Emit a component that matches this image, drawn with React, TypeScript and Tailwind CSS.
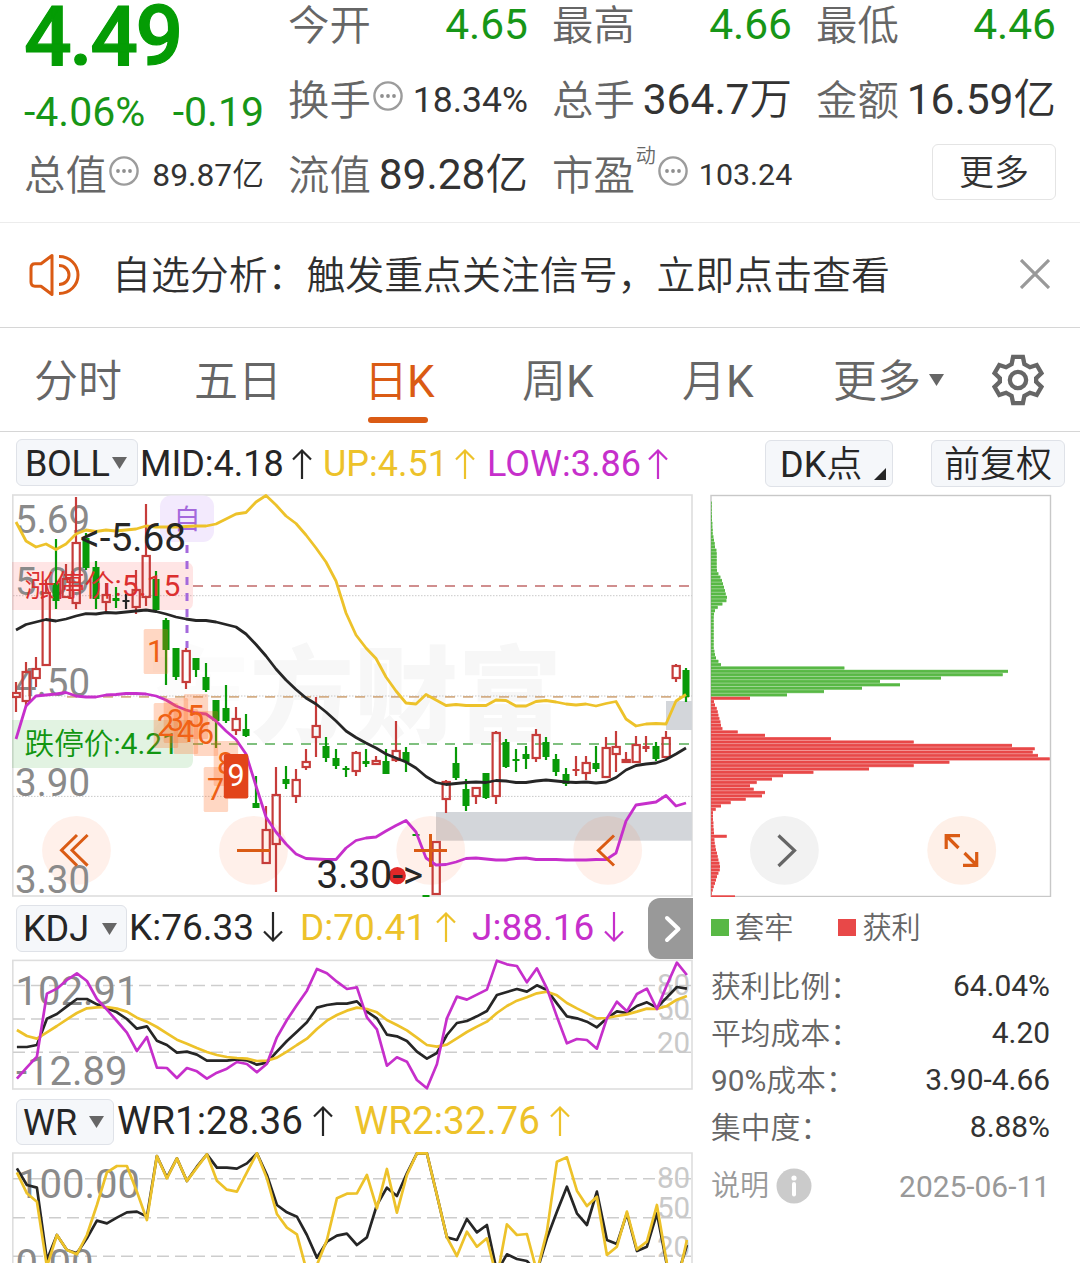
import React from "react";

const INK = "#262626";
const YELLOW = "#edc22a";
const MAGENTA = "#c62fcb";
const RED = "#c63c3a";
const GREEN = "#089a08";
const ORANGE = "#da5b14";

type Candle = [kind: "r" | "g" | "k", high: number, top: number, bottom: number, low: number];

const candles: Candle[] = [
  ["r", 682, 692, 698, 712], ["r", 662, 671, 702, 707], ["r", 657, 668, 679, 687], ["r", 580, 592, 666, 666],
  ["g", 539, 583, 601, 609], ["r", 564, 578, 598, 598], ["r", 497, 542, 604, 609], ["g", 533, 538, 568, 570],
  ["g", 561, 567, 599, 609], ["r", 583, 594, 603, 612], ["g", 587, 598, 601, 608], ["k", 594, 600, 602, 609],
  ["r", 570, 589, 608, 614], ["r", 504, 555, 598, 606], ["g", 571, 579, 610, 612], ["g", 618, 620, 650, 685],
  ["g", 648, 648, 677, 680], ["r", 648, 650, 683, 689], ["g", 658, 658, 670, 677], ["g", 663, 677, 690, 692],
  ["g", 700, 700, 721, 748], ["g", 685, 708, 721, 723], ["r", 707, 718, 731, 735], ["g", 714, 729, 736, 737],
  ["g", 776, 803, 808, 808], ["r", 806, 829, 864, 864], ["r", 767, 794, 845, 892], ["g", 766, 779, 784, 789],
  ["r", 769, 779, 797, 803], ["r", 749, 761, 768, 770], ["r", 697, 725, 738, 757], ["g", 737, 746, 758, 762],
  ["g", 749, 758, 766, 769], ["g", 766, 768, 770, 777], ["r", 751, 752, 772, 776], ["g", 749, 761, 764, 767],
  ["r", 756, 760, 765, 765], ["g", 749, 761, 774, 774], ["r", 721, 750, 761, 762], ["g", 747, 752, 762, 772],
  ["g", 834, 834, 836, 836], ["g", 895, 895, 897, 897], ["r", 841, 841, 895, 895], ["r", 780, 781, 800, 813],
  ["g", 747, 763, 778, 780], ["g", 779, 789, 806, 811], ["r", 787, 787, 797, 804], ["g", 773, 773, 798, 799],
  ["r", 731, 732, 797, 804], ["g", 739, 742, 767, 768], ["g", 749, 759, 761, 772], ["g", 746, 754, 759, 769],
  ["r", 729, 734, 759, 762], ["g", 737, 742, 757, 760], ["g", 754, 759, 772, 776], ["g", 768, 774, 784, 786],
  ["r", 756, 769, 771, 776], ["r", 756, 762, 774, 780], ["g", 746, 763, 769, 772], ["r", 737, 747, 778, 778],
  ["r", 731, 746, 755, 772], ["r", 752, 759, 763, 763], ["r", 736, 744, 763, 763], ["r", 736, 746, 749, 752],
  ["g", 742, 746, 759, 761], ["r", 731, 737, 758, 758], ["r", 664, 665, 679, 682], ["g", 668, 670, 697, 702],
];

const upper = [
  522, 541, 547, 544, 549.5, 544, 534, 530, 531.5, 530, 531, 530, 529, 526, 527, 527, 527, 526.5, 526, 526, 524, 519, 514,
  512.5, 502, 495.5, 505, 516, 523.5, 535, 548, 562, 581, 613, 635, 648, 658.5, 677, 691, 703, 704, 694.5, 700, 705.5, 704.5,
  705.5, 705.5, 705.5, 700, 700.5, 706, 706, 701.5, 700.5, 702, 704, 705, 704, 706, 703.5, 701.5, 719, 726, 724, 723.5, 724,
  701, 694.5,
];
const middle = [
  630, 624.5, 622, 619.5, 621, 619, 616, 613.7, 614, 612.5, 613, 612, 611, 610, 611.5, 614, 617, 619, 620.5, 620.5, 622,
  624.5, 627, 634, 644.5, 656, 669, 680, 689.5, 698, 704, 712, 721, 731, 737.5, 743, 748, 754, 758, 762, 768, 776.5, 782.5,
  784.5, 783.5, 782.5, 782, 782.5, 780.5, 781, 782.5, 782.5, 781, 780, 781, 782, 782.5, 782, 783, 782, 777.5, 770, 765.5,
  764, 763, 759.5, 754, 748,
];
const lower = [
  739, 706, 696, 695, 694, 692.5, 696, 697, 697, 695, 694.5, 693.5, 693.5, 694, 696, 700, 706, 710, 713, 714, 721, 731, 739.5,
  754, 786, 817, 832, 844, 854, 858.5, 859, 859.5, 859.5, 848, 840.5, 838, 837, 831, 825.5, 820.5, 832, 858, 865, 864.5, 862,
  858.5, 858, 859, 860, 860, 858.5, 858, 859.5, 859.5, 859.5, 860, 860, 860, 859.5, 859.7, 853, 821, 805, 803.5, 802, 795.5,
  806, 803,
];

const kdjK = [
  456, 456, 450, 371, 357, 334, 312, 312, 328, 340, 352, 372, 401, 394, 437, 450, 473, 470, 479, 497, 497, 497, 493, 496, 509,
  503, 470, 438, 410, 382, 338, 330, 326, 326, 319, 350, 370, 419, 424, 438, 470, 491, 474, 420, 384, 378, 364, 348, 300, 291,
  282, 290, 271, 285, 325, 364, 370, 380, 397, 370, 349, 354, 333, 322, 338, 307, 276, 281,
];
const kdjD = [
  405, 423, 431, 412, 393, 373, 354, 340, 337, 336, 341, 350, 368, 380, 396, 415, 434, 446, 459, 471, 480, 486, 489, 491, 498,
  497, 488, 470, 450, 431, 402, 377, 360, 347, 338, 342, 352, 375, 390, 406, 428, 450, 455, 449, 430, 411, 395, 380, 354, 333,
  317, 307, 295, 290, 301, 324, 340, 355, 370, 369, 363, 358, 350, 341, 342, 333, 314, 303,
];
const kdjJ = [
  551, 517, 485, 296, 281, 255, 235, 258, 312, 344, 378, 413, 468, 426, 518, 519, 549, 519, 529, 551, 533, 521, 501, 507, 532,
  506, 427, 375, 330, 287, 222, 235, 260, 282, 277, 367, 403, 512, 487, 500, 555, 580, 508, 370, 305, 314, 299, 284, 197, 208,
  213, 262, 220, 280, 365, 445, 432, 435, 461, 370, 320, 349, 297, 281, 342, 270, 203, 240,
];
const wr1 = [
  820, 870, 878, 1095, 1020, 1065, 1075, 1030, 977, 985, 968, 952, 950, 965, 783, 848, 790, 858, 815, 778, 818, 818, 821, 805,
  775, 840, 930, 952, 965, 1020, 1088, 1040, 1022, 1016, 1050, 1027, 930, 878, 903, 835, 775, 775, 900, 1027, 1035, 972, 1012,
  990, 1130, 1078, 1092, 1098, 1130, 1030, 950, 875, 955, 990, 890, 1035, 1047, 955, 1068, 1055, 955, 1110, 1150, 1050,
];
const wr2 = [
  832, 895, 920, 1115, 1020, 1065, 1078, 1020, 930, 832, 813, 813, 890, 975, 783, 850, 790, 858, 818, 778, 857, 884, 890, 832,
  775, 850, 957, 998, 1018, 1130, 1110, 1035, 910, 896, 895, 840, 940, 822, 953, 840, 775, 775, 900, 1027, 1083, 1010, 1055,
  1030, 1150, 988, 1020, 1017, 1130, 1010, 800, 787, 887, 933, 905, 1080, 1055, 950, 1063, 1040, 930, 1105, 1170, 1035,
];

const chips: number[] = [
  2, 2, 2, 2, 3, 3, 4, 4, 5, 5, 7, 9, 11, 12, 16, 17, 17, 17, 17, 17, 18, 22, 28, 33, 36, 39, 42, 44, 48, 46, 34, 20, 12, 9,
  8, 8, 8, 8, 8, 8, 8, 8, 8, 8, 10, 12, 15, 22, 30, 400, 891, 875, 690, 507, 567, 453, 339, 228, 117, 9, 12, 17, 20, 22, 25, 28,
  30, 34, 80, 162, 360, 608, 903, 971, 965, 981, 1016, 715, 608, 474, 307, 216, 183, 137, 117, 128, 162, 153, 104, 59, 30, 14,
  6, 6, 6, 7, 7, 8, 9, 47, 10, 11, 13, 15, 18, 20, 22, 25, 27, 26, 22, 18, 15, 12, 8, 5, 2, 72,
];
const TRAPPED_ROWS = 58;

const line = (values: number[], x0 = 16) => values.map((y, i) => `${x0 + i * 10},${y}`).join(" ");
const scaled = (values: number[]) => line(values.map((v) => 895 + v / 3), 16.9);

const signals = [
  { n: "1", x: 156, y: 662 }, { n: "2", x: 166, y: 736 }, { n: "3", x: 176, y: 731 }, { n: "4", x: 186, y: 742 },
  { n: "5", x: 196, y: 727 }, { n: "6", x: 206, y: 744 }, { n: "8", x: 226, y: 774 }, { n: "7", x: 216, y: 800 },
];

function Dots() {
  return (
    <svg className="h-8 w-8 shrink-0" viewBox="0 0 32 32">
      <circle cx="16" cy="16" r="13.6" fill="none" stroke="#9c9c9c" strokeWidth="2.4" />
      <circle cx="10" cy="16" r="1.9" fill="#8f8f8f" />
      <circle cx="16" cy="16" r="1.9" fill="#8f8f8f" />
      <circle cx="22" cy="16" r="1.9" fill="#8f8f8f" />
    </svg>
  );
}

function Label({ children }: { children: React.ReactNode }) {
  return <span className="self-start pt-px text-[41.4px] font-[350] text-[#666]">{children}</span>;
}

function Unit({ children }: { children: React.ReactNode }) {
  return <span className="font-[350]">{children}</span>;
}

function Arrow({ down, className }: { down?: boolean; className?: string }) {
  return (
    <svg className={`h-[30px] w-[20px] shrink-0 ${className ?? ""}`} viewBox="0 0 20 30" fill="none" stroke="currentColor" strokeWidth="2.2">
      {down ? <path d="M10 0V29M1 19.5L10 28.5L19 19.5" /> : <path d="M10 30V1.5M1 10.5L10 1.5L19 10.5" />}
    </svg>
  );
}

function Caret() {
  return (
    <svg className="h-3 w-[15px] shrink-0" viewBox="0 0 15 12">
      <path d="M0 0H15L7.5 12Z" fill="#666" />
    </svg>
  );
}

function Header() {
  return (
    <header className="grid h-[222px] grid-cols-4 gap-x-6 px-6 pt-px text-[42.5px] leading-[48px] text-[#333]">
      <div className="flex flex-col whitespace-nowrap">
        <div className="h-[72px] text-[84px] leading-[71px] font-medium tracking-[-2.4px] text-[#049c04] [-webkit-text-stroke:1.2px_#049c04]">4.49</div>
        <div className="mt-[15px] flex h-12 justify-between text-[41px] text-[#179617]">
          <span>-4.06%</span>
          <span>-0.19</span>
        </div>
        <div className="mt-[15px] flex h-12 items-center">
          <Label>总值</Label>
          <span className="mb-2 ml-px"><Dots /></span>
          <span className="ml-auto text-[31.8px]">89.87<Unit>亿</Unit></span>
        </div>
      </div>
      <div className="flex flex-col gap-[27px] whitespace-nowrap">
        <div className="flex h-12 justify-between"><Label>今开</Label><span className="text-[#179617]">4.65</span></div>
        <div className="flex h-12 items-center">
          <Label>换手</Label>
          <span className="mb-2 ml-px"><Dots /></span>
          <span className="ml-auto text-[35.5px]">18.34%</span>
        </div>
        <div className="flex h-12 justify-between"><Label>流值</Label><span>89.28<Unit>亿</Unit></span></div>
      </div>
      <div className="flex flex-col gap-[27px] whitespace-nowrap">
        <div className="flex h-12 justify-between"><Label>最高</Label><span className="text-[#179617]">4.66</span></div>
        <div className="flex h-12 justify-between"><Label>总手</Label><span>364.7<Unit>万</Unit></span></div>
        <div className="flex h-12 items-center">
          <Label>市盈</Label>
          <span className="mb-[38px] ml-px text-[20px] font-[350] text-[#666]">动</span>
          <span className="mb-2 ml-px"><Dots /></span>
          <span className="mr-auto ml-[10px] text-[30.4px]">103.24</span>
        </div>
      </div>
      <div className="flex flex-col gap-[27px] whitespace-nowrap">
        <div className="flex h-12 justify-between"><Label>最低</Label><span className="text-[#179617]">4.46</span></div>
        <div className="flex h-12 justify-between"><Label>金额</Label><span>16.59<Unit>亿</Unit></span></div>
        <div className="-mt-[7px] flex h-14 w-[124px] items-center justify-center self-end rounded-md border-[1.5px] border-[#e4e4e4] pt-[3px] text-[35px] leading-[48px] font-[350]">
          更多
        </div>
      </div>
    </header>
  );
}

function Notice() {
  return (
    <section className="flex h-[105px] items-center border-t border-[#ececec] pr-[30px] pl-[29px]">
      <svg className="h-[44px] w-[52px]" viewBox="0 0 52 44" fill="none" stroke={ORANGE} strokeWidth="3">
        <path d="M23 2.5V41.5L12 33.2H6C3.5 33.2 2 31.5 2 29V15C2 12.5 3.5 10.8 6 10.8H12Z" strokeLinejoin="round" />
        <path d="M30 3.5C41 3.5 49 12 49 22C49 32 41 40.5 30 40.5" />
        <path d="M30 12.5C36 12.5 40 17 40 22C40 27 36 31.5 30 31.5" />
      </svg>
      <p className="ml-[31px] pt-[3px] text-[38.9px] font-[350] text-[#303030]">自选分析：触发重点关注信号，立即点击查看</p>
      <svg className="mb-[2px] ml-auto h-[30px] w-[30px]" viewBox="0 0 30 30" stroke="#999" strokeWidth="3.2">
        <path d="M1 1L29 29M29 1L1 29" />
      </svg>
    </section>
  );
}

function Tabs() {
  return (
    <nav className="flex h-[105px] items-center border-y border-[#d6d6d6] pl-[34px] text-[44px] font-[350] whitespace-nowrap text-[#666]">
      <span className="w-[160px] pt-[5px]">分时</span>
      <span className="w-[170px] pt-[5px]">五日</span>
      <span className="relative w-[158px] pt-[5px] text-[#da5b14]">
        日<span className="-ml-px font-normal">K</span>
        <span className="absolute -bottom-[8px] left-[4px] h-[6px] w-[60px] rounded-full bg-[#da5b14]" />
      </span>
      <span className="w-[160px] pt-[5px]">周<span className="font-normal">K</span></span>
      <span className="w-[151px] pt-[5px]">月<span className="font-normal">K</span></span>
      <span className="pt-[5px]">更多</span>
      <span className="ml-2"><Caret /></span>
      <svg className="ml-[48px] h-[52px] w-[52px]" viewBox="0 0 53 53" fill="none" stroke="#666" strokeWidth="4.4">
        <path d="M21.5 3H31.5L33 10.2L38.7 13.5L45.6 11.2L50.4 19.5L45 24.6V28.4L50.4 33.5L45.6 41.8L38.7 39.5L33 42.8L31.5 50H21.5L20 42.8L14.3 39.5L7.4 41.8L2.6 33.5L8 28.4V24.6L2.6 19.5L7.4 11.2L14.3 13.5L20 10.2Z" />
        <circle cx="26.5" cy="26.5" r="8.3" />
      </svg>
    </nav>
  );
}

const pill = "flex items-center rounded-md border border-[#dfe2e8] bg-[#f5f7fa]";

function BollRow() {
  return (
    <div className="flex h-[63px] items-start pt-[7px] pl-4 text-[36px] leading-[46px] whitespace-nowrap text-[#262626]">
      <div className={`${pill} h-[47px] w-[122px] pl-2`}>
        <span className="pt-[3px] tracking-[-0.4px]">BOLL</span>
        <span className="ml-[3px]"><Caret /></span>
      </div>
      <span className="ml-[2px] w-[150px] pt-[2px]">MID:4.18</span>
      <Arrow className="mt-[10px] ml-[2px]" />
      <span className="ml-[11px] w-[130px] pt-[2px] text-[#edc22a]">UP:4.51</span>
      <Arrow className="mt-[10px] ml-[2px] text-[#edc22a]" />
      <span className="ml-[12px] w-[160px] pt-[2px] text-[#c62fcb]">LOW:3.86</span>
      <Arrow className="mt-[10px] ml-[1px] text-[#c62fcb]" />
      <div className={`${pill} relative mt-px ml-auto h-[47px] w-[128px] pl-[14px]`}>
        <span className="pt-[2px]">DK<span className="font-[350]">点</span></span>
        <svg className="absolute right-[6px] bottom-[6px] h-3 w-3" viewBox="0 0 12 12"><path d="M12 0V12H0Z" fill={INK} /></svg>
      </div>
      <div className={`${pill} mt-px mr-[15px] ml-[38px] h-[47px] w-[134px] justify-center pt-[3px] font-[350]`}>前复权</div>
    </div>
  );
}

function PriceChart() {
  return (
    <svg className="block h-[403px] w-[681px]" viewBox="12 494 681 403" fontFamily="Roboto, 'Noto Sans CJK SC', sans-serif">
      <text x="146" y="734" fontSize="104" fontWeight="900" fill="#f7f7f7"><tspan fill="#fcfcfc">东</tspan>方财富</text>
      <rect x="12.8" y="495" width="679.2" height="401" fill="none" stroke="#dedede" strokeWidth="1.6" />
      <g stroke="#c9c9c9" strokeDasharray="1.5 1.5">
        <path d="M13 595.7H692M13 696H692M13 796.4H692" />
      </g>
      <rect x="436" y="812" width="256" height="28.7" fill="#d3d6da" />
      <rect x="666" y="701" width="26" height="29" fill="#d3d6da" />
      <g strokeWidth="1.8" strokeDasharray="10 8">
        <path d="M193 586H692" stroke="#d08e8e" />
        <path d="M67 696.8H692" stroke="#d3ad85" />
        <path d="M193 744H692" stroke="#7fc07f" />
      </g>
      <g fill="#ff7030" fillOpacity="0.1">
        {[76.5, 253.5, 430.7, 607.7].map((cx) => <circle key={cx} cx={cx} cy="850.4" r="34.4" />)}
      </g>
      <path d="M12 562H185Q193 562 193 570V602Q193 610 185 610H12Z" fill="#ff4646" fillOpacity="0.14" />
      <path d="M12 720H193V760Q193 768 185 768H12Z" fill="#1ea01e" fillOpacity="0.13" />
      <rect x="160" y="495.5" width="54" height="46.5" rx="11" fill="#f3eafd" />
      <text x="173.5" y="529" fontSize="27" fill="#a469dc">自</text>
      <path d="M187 545V648" stroke="#a469dc" strokeWidth="3" strokeDasharray="8 8" />
      <g fontSize="38.5" fill="#8a8a8a">
        <text x="15" y="533">5.69</text>
        <text x="15" y="595">5.09</text>
        <text x="15" y="696">4.50</text>
        <text x="15" y="796">3.90</text>
        <text x="15" y="893">3.30</text>
      </g>
      {candles.map(([kind, high, top, bottom, low], i) => {
        const x = 16 + i * 10;
        const color = kind === "r" ? RED : kind === "g" ? GREEN : INK;
        const hollow = kind === "r" && bottom - top > 3;
        return (
          <g key={i} stroke={color} strokeWidth="2.2">
            {top > high && <path d={`M${x} ${high}V${top}`} />}
            {low > bottom && <path d={`M${x} ${bottom}V${low}`} />}
            {hollow ? (
              <rect x={x - 3.4} y={top + 1} width="7.2" height={bottom - top - 2} fill="none" />
            ) : (
              <rect x={x - 3.5} y={top} width="7" height={bottom - top} fill={color} stroke="none" />
            )}
          </g>
        );
      })}
      <text x="24.5" y="596" fontSize="30" fill="#dc2f2f"><tspan fontWeight="350">涨停价</tspan>:5.15</text>
      <text x="24.5" y="754" fontSize="29.7" fill="#119611"><tspan fontWeight="350">跌停价</tspan>:4.21</text>
      <g fill="none" strokeWidth="2.8" strokeLinejoin="round">
        <polyline points={line(upper)} stroke={YELLOW} />
        <polyline points={line(middle)} stroke={INK} />
        <polyline points={line(lower)} stroke={MAGENTA} />
      </g>
      <text x="80" y="551" fontSize="38.8" fill={INK}>&lt;-5.68</text>
      {signals.map((s) => (
        <g key={s.n}>
          <rect x={s.x - 12.3} y={s.y - 33} width="24.4" height="45" rx="1.5" fill="#ff6a22" fillOpacity="0.27" />
          <text x={s.x - 9} y={s.y} fontSize="30.5" fill="#ee6014">{s.n}</text>
        </g>
      ))}
      <rect x="223.8" y="754" width="24.5" height="44.5" rx="2" fill="#e2441a" />
      <text x="227.5" y="786" fontSize="30.5" fill="#fff">9</text>
      <circle cx="397.3" cy="875.7" r="8.6" fill="#e22828" />
      <text x="316.5" y="888" fontSize="38.8" fill={INK}>3.30-&gt;</text>
      <g fill="none" stroke={ORANGE} strokeWidth="3">
        <path d="M77 835L61.5 850.3L77 865.6M87.6 835L72 850.3L87.6 865.6" />
        <path d="M237 850.4H270" />
        <path d="M414 850.4H447M430.5 834V867" />
        <path d="M614 835.5L598.3 850.5L614 865.5" />
      </g>
    </svg>
  );
}

function ChipChart() {
  return (
    <svg className="block h-[403px] w-[342px]" viewBox="710 494 342 403">
      <rect x="711" y="495.5" width="339.5" height="401" fill="none" stroke="#c8c8c8" strokeWidth="1.4" />
      {chips.map((w, k) => {
        const y = 668 + (k - 49) * 3.366;
        const color = k < TRAPPED_ROWS ? "#58b845" : "#e84848";
        return (
          <g key={k} fill={color}>
            <rect x="711" y={y - 1.68} width={w / 3} height="3.37" fillOpacity="0.6" />
            <rect x="711" y={y - 1.3} width={w / 3} height="2.5" />
          </g>
        );
      })}
      <circle cx="784.4" cy="850.4" r="34.4" fill="#f2f2f2" />
      <circle cx="961.7" cy="850.4" r="34.4" fill="#fef0e8" />
      <path d="M778.5 835.5L794.5 850.5L778.5 866" fill="none" stroke="#666" strokeWidth="3.2" />
      <path d="M960 835.7H946.2V849M946.5 836L958.5 848M963 865.3H976.7V852M976.5 865L964.5 853" fill="none" stroke={ORANGE} strokeWidth="3.2" />
    </svg>
  );
}

function KdjRow() {
  return (
    <div className="flex h-[62px] items-start pt-2 pl-1 text-[37px] leading-[46px] whitespace-nowrap text-[#262626]">
      <div className={`${pill} h-[47px] w-[111px] pl-[6px]`}>
        <span className="w-[64px] pt-px text-[36px]">KDJ</span>
        <span className="ml-[15px]"><Caret /></span>
      </div>
      <span className="ml-[2px] w-[128px]">K:76.33</span>
      <Arrow down className="mt-[7px] ml-[6px]" />
      <span className="ml-[17px] w-[125px] text-[#edc22a]">D:70.41</span>
      <Arrow className="mt-[7px] ml-[11px] text-[#edc22a]" />
      <span className="ml-[16px] w-[125px] text-[#c62fcb]">J:88.16</span>
      <Arrow down className="mt-[7px] ml-[7px] text-[#c62fcb]" />
      <div className="-mt-[7px] ml-auto flex h-[61px] w-[45px] items-center justify-center rounded-l-xl bg-[#999]">
        <svg className="ml-1 h-[30px] w-[20px]" viewBox="0 0 20 30" fill="none" stroke="#fff" strokeWidth="4" strokeLinecap="round" strokeLinejoin="round">
          <path d="M4 4L15.5 15L4 26" />
        </svg>
      </div>
    </div>
  );
}

function KdjChart() {
  return (
    <svg className="block h-[131px] w-[681px]" viewBox="12 959 681 131" fontFamily="Roboto, sans-serif">
      <rect x="12.8" y="960.4" width="679.2" height="128.6" fill="none" stroke="#dedede" strokeWidth="1.6" />
      <path d="M13 985.5H692M13 1019H692M13 1052.3H692" stroke="#cdcdcd" strokeWidth="1.4" strokeDasharray="12 6" />
      <g fontSize="40" fill="#8a8a8a">
        <text x="15.5" y="1005">102.91</text>
        <text x="16" y="1085">-12.89</text>
      </g>
      <g fontSize="29.5" fill="#c9c9c9">
        <text x="657" y="995">80</text>
        <text x="657" y="1019">50</text>
        <text x="657" y="1053">20</text>
      </g>
      <g fill="none" strokeWidth="2.7" strokeLinejoin="round">
        <polyline points={scaled(kdjK)} stroke={INK} />
        <polyline points={scaled(kdjD)} stroke={YELLOW} />
        <polyline points={scaled(kdjJ)} stroke={MAGENTA} />
      </g>
    </svg>
  );
}

function WrRow() {
  return (
    <div className="flex h-[62px] items-start pt-[9px] pl-1 text-[38.6px] leading-[46px] whitespace-nowrap text-[#262626]">
      <div className={`${pill} h-[46px] w-[98px] pl-[6px]`}>
        <span className="w-[52px] pt-px text-[36px]">WR</span>
        <span className="ml-[14px]"><Caret /></span>
      </div>
      <span className="-mt-px ml-[3px] w-[188px]">WR1:28.36</span>
      <Arrow className="mt-[7px] ml-[8px]" />
      <span className="-mt-px ml-[21px] w-[188px] text-[#edc22a]">WR2:32.76</span>
      <Arrow className="mt-[7px] ml-[8px] text-[#edc22a]" />
    </div>
  );
}

function WrChart() {
  return (
    <svg className="block h-[111px] w-[681px]" viewBox="12 1152 681 111" fontFamily="Roboto, sans-serif">
      <path d="M12.8 1263V1153H692V1263" fill="none" stroke="#dedede" strokeWidth="1.6" />
      <path d="M13 1178.7H692M13 1217.7H692M13 1256.3H692" stroke="#cdcdcd" strokeWidth="1.4" strokeDasharray="12 6" />
      <g fill="none" strokeWidth="2.7" strokeLinejoin="round">
        <g fontSize="40" fill="#8a8a8a" stroke="none">
          <text x="17" y="1198">100.00</text>
          <text x="15.5" y="1277.5">0.00</text>
        </g>
        <g fontSize="29.5" fill="#c9c9c9" stroke="none">
          <text x="657" y="1188">80</text>
          <text x="657" y="1218">50</text>
          <text x="657" y="1256.5">20</text>
        </g>
        <polyline points={scaled(wr1)} stroke={INK} />
        <polyline points={scaled(wr2)} stroke={YELLOW} />
      </g>
    </svg>
  );
}

const stats = [
  ["", "获利比例：", "64.04%"],
  ["", "平均成本：", "4.20"],
  ["90%", "成本：", "3.90-4.66"],
  ["", "集中度：", "8.88%"],
];

function ChipPanel() {
  return (
    <aside className="ml-[17px] w-[342px] text-[29.9px] leading-[47px] text-[#666]">
      <ChipChart />
      <div className="flex h-[60px] items-center pl-px font-[350]">
        <span className="h-[17px] w-[18px] bg-[#58b845]" />
        <span className="ml-[6px] pt-[2px] text-[29.2px]">套牢</span>
        <span className="ml-[45px] h-[17px] w-[18px] bg-[#e84848]" />
        <span className="ml-[6px] pt-[2px] text-[29.2px]">获利</span>
      </div>
      <div className="mt-[5px] pr-[2px] pl-px">
        {stats.map(([prefix, label, value]) => (
          <div key={value} className="flex h-[47px] justify-between">
            <span className="pt-px text-[29.8px]">{prefix}<span className="font-[350]">{label}</span></span>
            <span className="text-[#333]">{value}</span>
          </div>
        ))}
        <div className="mt-3 flex h-[47px] items-center text-[#999]">
          <span className="pt-[2px] text-[29px] font-[350]">说明</span>
          <svg className="ml-[7px] h-9 w-9" viewBox="0 0 36 36">
            <circle cx="18" cy="18" r="17.5" fill="#cbcbcb" />
            <circle cx="18" cy="10" r="2.6" fill="#fff" />
            <path d="M18 16V26.5" stroke="#fff" strokeWidth="4" strokeLinecap="round" />
          </svg>
          <span className="ml-auto pt-px">2025-06-11</span>
        </div>
      </div>
    </aside>
  );
}

export default function App() {
  return (
    <main lang="zh-CN" className="h-[1263px] w-[1080px] overflow-hidden bg-white font-[Roboto,'Noto_Sans_CJK_SC',sans-serif]">
      <Header />
      <Notice />
      <Tabs />
      <BollRow />
      <div className="-mt-px flex pl-3">
        <div className="w-[681px]">
          <PriceChart />
          <KdjRow />
          <KdjChart />
          <WrRow />
          <WrChart />
        </div>
        <ChipPanel />
      </div>
    </main>
  );
}
